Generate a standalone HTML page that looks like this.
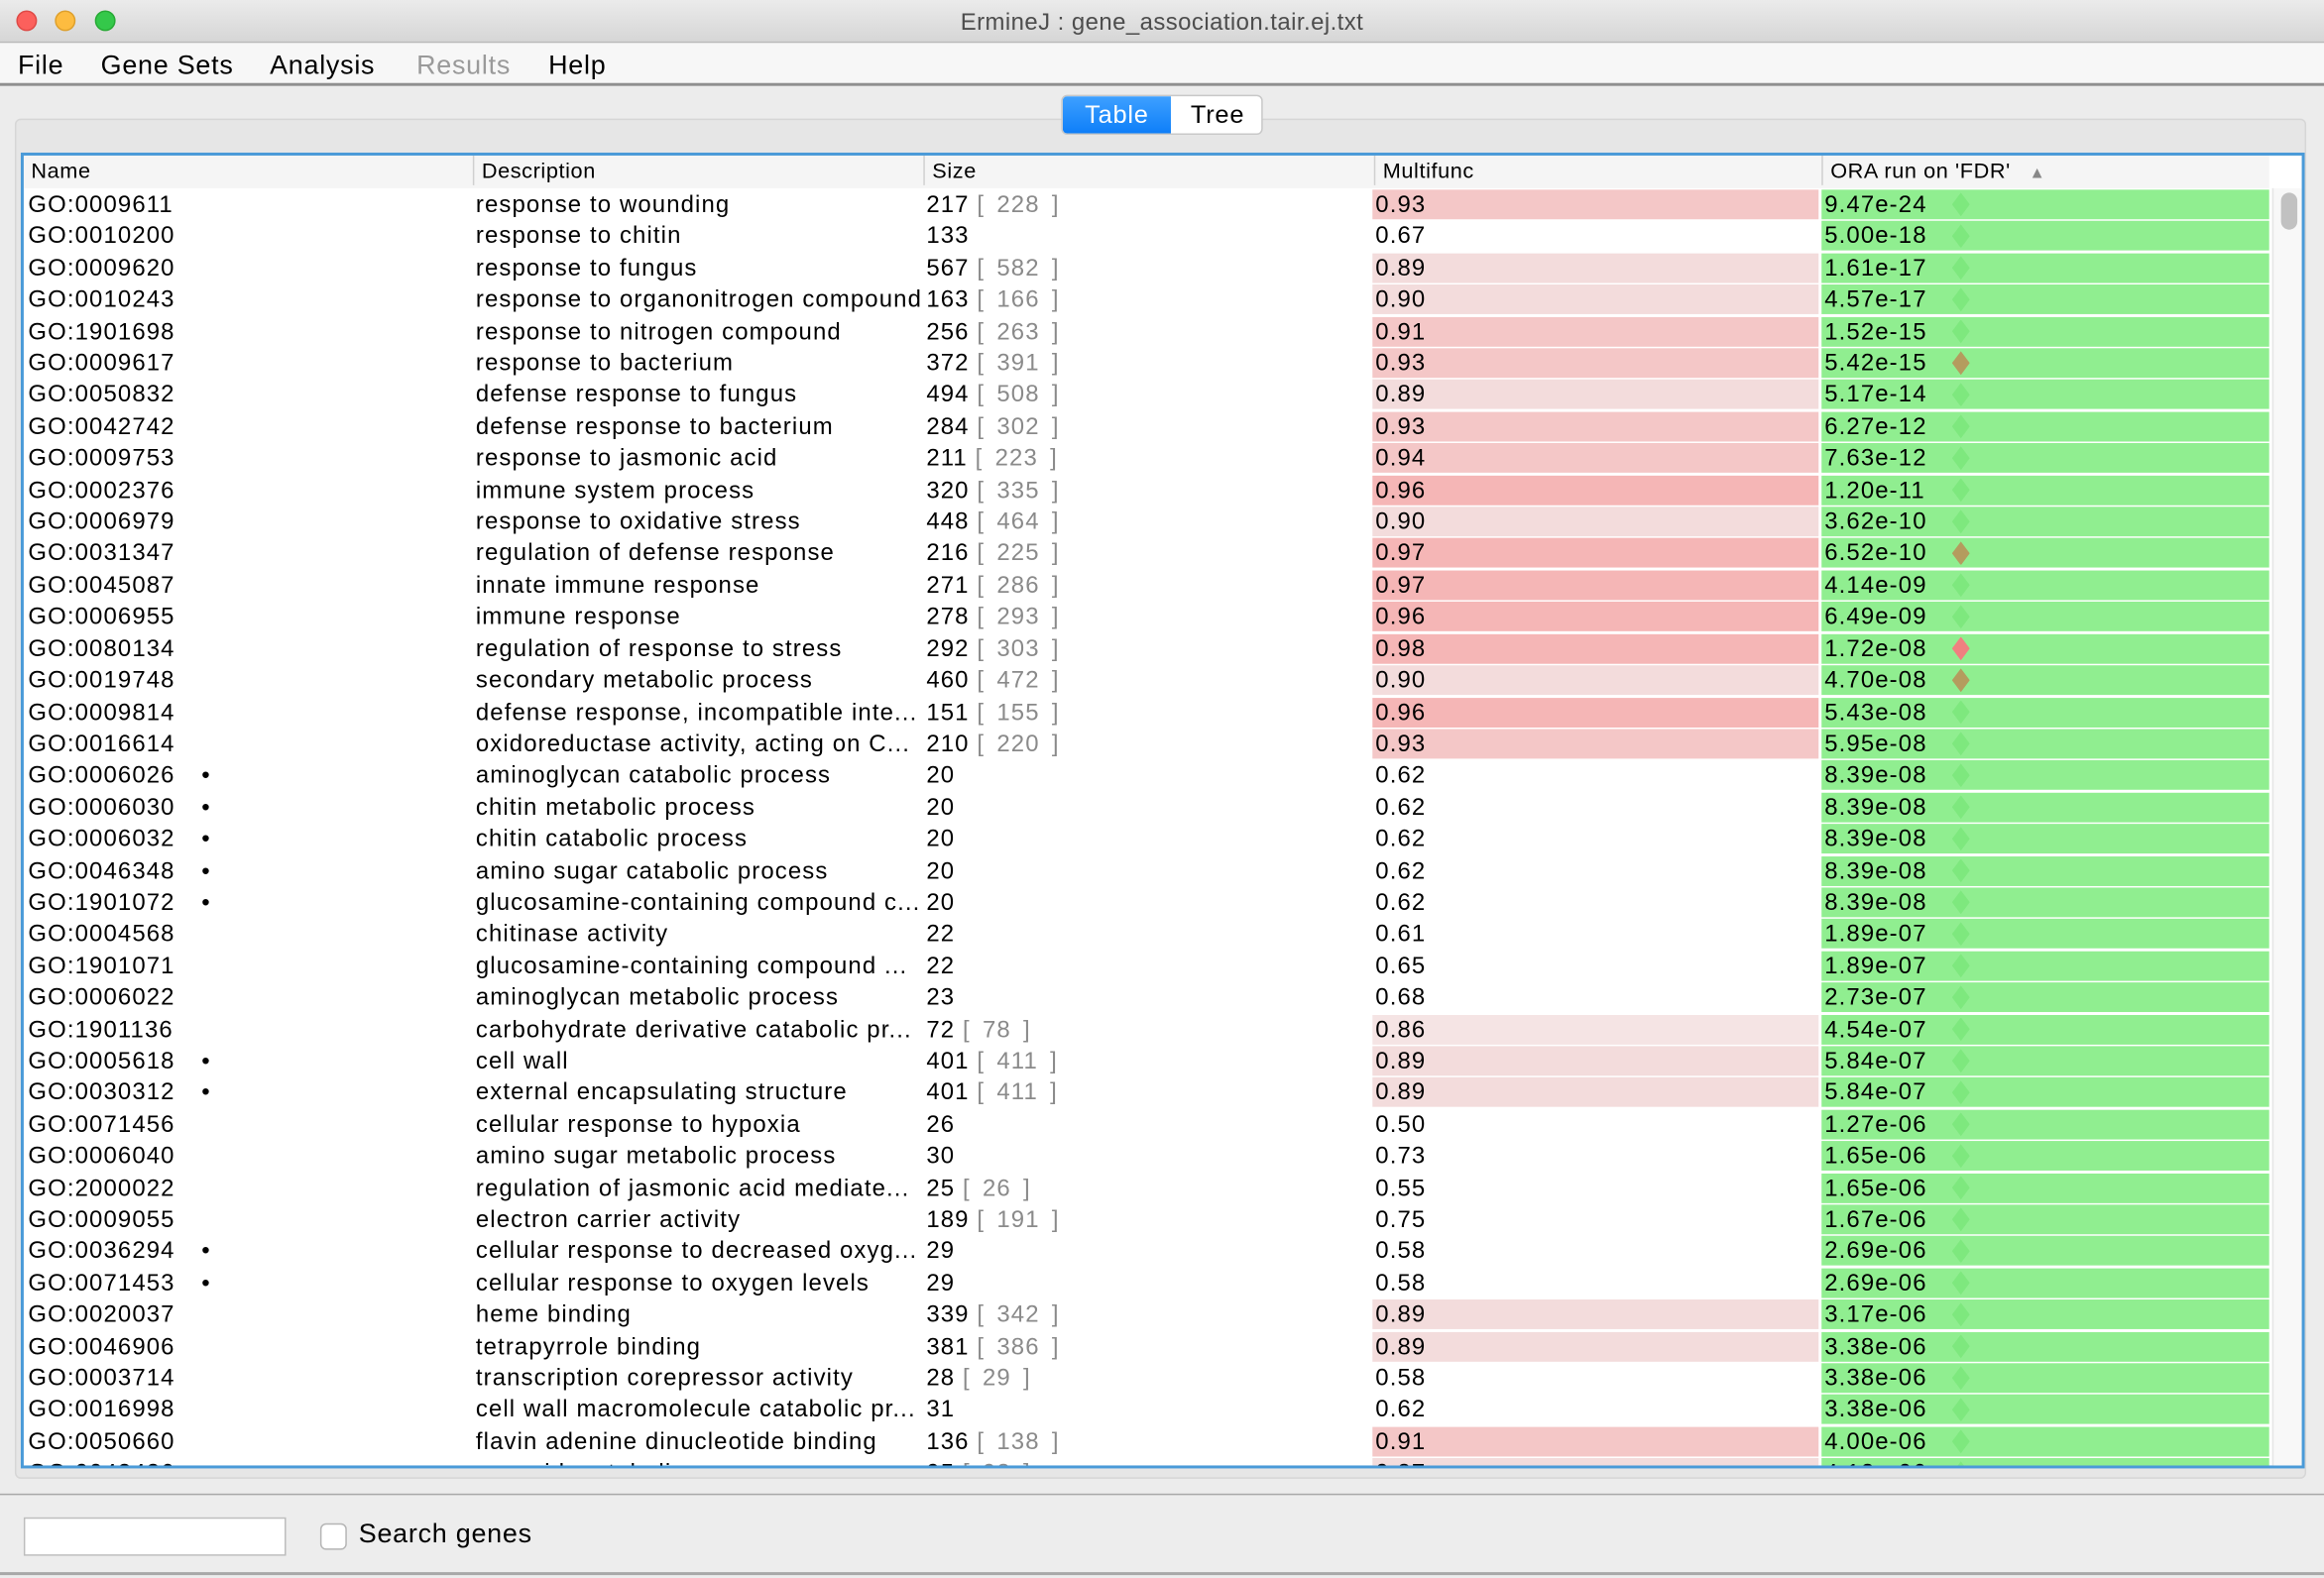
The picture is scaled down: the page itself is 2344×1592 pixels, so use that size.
<!DOCTYPE html>
<html><head><meta charset="utf-8"><style>
*{box-sizing:border-box;margin:0;padding:0}
html,body{width:2344px;height:1592px;overflow:hidden;background:#ececec}
#w{position:absolute;left:0;top:0;width:1568px;height:1065px;transform:scale(1.49490);transform-origin:0 0;font-family:"Liberation Sans","DejaVu Sans",sans-serif;background:#ececec;overflow:hidden}
.abs{position:absolute}
#title{left:0;top:0;width:1568px;height:29px;background:linear-gradient(#ebebeb,#d6d6d6);border-bottom:1px solid #b8b8b8;text-align:center;font-size:16px;line-height:31px;color:#4d4d4d;letter-spacing:.3px}
.tl{top:7px;width:14px;height:14px;border-radius:50%}
#menu{left:0;top:29px;width:1568px;height:29px;background:#f7f7f7;border-bottom:2px solid #8f8f8f;font-size:18px;line-height:30px;letter-spacing:.5px}
#menu span{position:absolute;top:0}
#tog{left:716px;top:64px;width:136px;height:27px;border-radius:4px;border:1px solid #c8c8c8;background:#fff;font-size:17px;line-height:26px;letter-spacing:.5px;overflow:hidden}
#tbl{left:14px;top:103px;width:1541px;height:888px;border:2px solid #4a9ad8;background:#fff;overflow:hidden}
#hdr{position:absolute;left:0;top:0;width:1515px;height:22px;background:#f5f5f5;font-size:14.5px;line-height:22px;letter-spacing:.4px}
#hdr span{position:absolute;top:0;border-left:1px solid #d0d0d0;padding-left:5px;height:20px}
#rows{position:absolute;left:0;top:22px;width:1515px}
.r{height:21.41px;position:relative;font-size:16px;letter-spacing:.75px;line-height:21px}
.r div{position:absolute;top:1px;height:20px;white-space:nowrap;overflow:hidden}
.n{left:3px;width:300px}
.n i{font-style:normal;position:absolute;left:117px;top:0}
.d{left:305px;width:304px}
.s{left:609px;width:302px}
.s em{font-style:normal;color:#8a8a8a;word-spacing:3px}
.m{left:910px;width:301px;padding-left:2px}
.o{left:1213px;width:302px;background:#90ee90;padding-left:2px}
.p1{background:#f5b6b6}.p2{background:#f4c7c7}.p3{background:#f3dcdc}.p4{background:#f5e4e4}
.o b{position:absolute;left:88px;top:2px;width:12px;height:16px;background:#7ee87e;clip-path:polygon(50% 0,100% 50%,50% 100%,0 50%)}
.o b.br{background:#b49c5e}.o b.rd{background:#f08080}
#sb{left:1517px;top:22px;width:20px;height:864px;background:#f8f8f8;border-left:1px solid #e6e6e6}
#thumb{left:5px;top:3px;width:11px;height:25px;border-radius:6px;background:#c1c1c1}
#bot{left:0;top:1008px;width:1568px;height:55px;background:#ededed;border-top:1px solid #a8a8a8;border-bottom:2px solid #a8a8a8}
</style></head><body><div id="w">
<div id="title" class="abs">ErmineJ : gene_association.tair.ej.txt
<div class="abs tl" style="left:11px;background:#fc605c;border:1px solid #de4a46"></div>
<div class="abs tl" style="left:37px;background:#fdbc40;border:1px solid #dea02c"></div>
<div class="abs tl" style="left:64px;background:#34c84a;border:1px solid #27aa35"></div>
</div>
<div id="menu" class="abs"><span style="left:12px">File</span><span style="left:68px">Gene Sets</span><span style="left:182px">Analysis</span><span style="left:281px;color:#9a9a9a">Results</span><span style="left:370px">Help</span></div>
<div class="abs" style="left:10px;top:80px;width:1546px;height:918px;border:1px solid #d6d6d6;border-radius:4px;background:#e6e6e6"></div>
<div id="tog" class="abs"><div class="abs" style="left:0;top:0;width:73px;height:27px;background:linear-gradient(#3ea0ff,#0a7cf8);color:#fff;text-align:center">Table</div><div class="abs" style="left:73px;top:0;width:63px;text-align:center">Tree</div></div>
<div id="tbl" class="abs">
<div id="hdr"><span style="left:0;border-left:none">Name</span><span style="left:303px">Description</span><span style="left:607px">Size</span><span style="left:911px">Multifunc</span><span style="left:1213px">ORA run on 'FDR' <small style="font-size:11px;color:#888;margin-left:8px">▲</small></span></div>
<div id="sb" class="abs"><div id="thumb" class="abs"></div></div>
<div id="rows">
<div class="r"><div class="n">GO:0009611</div><div class="d">response to wounding</div><div class="s">217 <em>[ 228 ]</em></div><div class="m p2">0.93</div><div class="o">9.47e-24<b></b></div></div>
<div class="r"><div class="n">GO:0010200</div><div class="d">response to chitin</div><div class="s">133</div><div class="m">0.67</div><div class="o">5.00e-18<b></b></div></div>
<div class="r"><div class="n">GO:0009620</div><div class="d">response to fungus</div><div class="s">567 <em>[ 582 ]</em></div><div class="m p3">0.89</div><div class="o">1.61e-17<b></b></div></div>
<div class="r"><div class="n">GO:0010243</div><div class="d">response to organonitrogen compound</div><div class="s">163 <em>[ 166 ]</em></div><div class="m p3">0.90</div><div class="o">4.57e-17<b></b></div></div>
<div class="r"><div class="n">GO:1901698</div><div class="d">response to nitrogen compound</div><div class="s">256 <em>[ 263 ]</em></div><div class="m p2">0.91</div><div class="o">1.52e-15<b></b></div></div>
<div class="r"><div class="n">GO:0009617</div><div class="d">response to bacterium</div><div class="s">372 <em>[ 391 ]</em></div><div class="m p2">0.93</div><div class="o">5.42e-15<b class="br"></b></div></div>
<div class="r"><div class="n">GO:0050832</div><div class="d">defense response to fungus</div><div class="s">494 <em>[ 508 ]</em></div><div class="m p3">0.89</div><div class="o">5.17e-14<b></b></div></div>
<div class="r"><div class="n">GO:0042742</div><div class="d">defense response to bacterium</div><div class="s">284 <em>[ 302 ]</em></div><div class="m p2">0.93</div><div class="o">6.27e-12<b></b></div></div>
<div class="r"><div class="n">GO:0009753</div><div class="d">response to jasmonic acid</div><div class="s">211 <em>[ 223 ]</em></div><div class="m p2">0.94</div><div class="o">7.63e-12<b></b></div></div>
<div class="r"><div class="n">GO:0002376</div><div class="d">immune system process</div><div class="s">320 <em>[ 335 ]</em></div><div class="m p1">0.96</div><div class="o">1.20e-11<b></b></div></div>
<div class="r"><div class="n">GO:0006979</div><div class="d">response to oxidative stress</div><div class="s">448 <em>[ 464 ]</em></div><div class="m p3">0.90</div><div class="o">3.62e-10<b></b></div></div>
<div class="r"><div class="n">GO:0031347</div><div class="d">regulation of defense response</div><div class="s">216 <em>[ 225 ]</em></div><div class="m p1">0.97</div><div class="o">6.52e-10<b class="br"></b></div></div>
<div class="r"><div class="n">GO:0045087</div><div class="d">innate immune response</div><div class="s">271 <em>[ 286 ]</em></div><div class="m p1">0.97</div><div class="o">4.14e-09<b></b></div></div>
<div class="r"><div class="n">GO:0006955</div><div class="d">immune response</div><div class="s">278 <em>[ 293 ]</em></div><div class="m p1">0.96</div><div class="o">6.49e-09<b></b></div></div>
<div class="r"><div class="n">GO:0080134</div><div class="d">regulation of response to stress</div><div class="s">292 <em>[ 303 ]</em></div><div class="m p1">0.98</div><div class="o">1.72e-08<b class="rd"></b></div></div>
<div class="r"><div class="n">GO:0019748</div><div class="d">secondary metabolic process</div><div class="s">460 <em>[ 472 ]</em></div><div class="m p3">0.90</div><div class="o">4.70e-08<b class="br"></b></div></div>
<div class="r"><div class="n">GO:0009814</div><div class="d">defense response, incompatible inte...</div><div class="s">151 <em>[ 155 ]</em></div><div class="m p1">0.96</div><div class="o">5.43e-08<b></b></div></div>
<div class="r"><div class="n">GO:0016614</div><div class="d">oxidoreductase activity, acting on C...</div><div class="s">210 <em>[ 220 ]</em></div><div class="m p2">0.93</div><div class="o">5.95e-08<b></b></div></div>
<div class="r"><div class="n">GO:0006026<i>•</i></div><div class="d">aminoglycan catabolic process</div><div class="s">20</div><div class="m">0.62</div><div class="o">8.39e-08<b></b></div></div>
<div class="r"><div class="n">GO:0006030<i>•</i></div><div class="d">chitin metabolic process</div><div class="s">20</div><div class="m">0.62</div><div class="o">8.39e-08<b></b></div></div>
<div class="r"><div class="n">GO:0006032<i>•</i></div><div class="d">chitin catabolic process</div><div class="s">20</div><div class="m">0.62</div><div class="o">8.39e-08<b></b></div></div>
<div class="r"><div class="n">GO:0046348<i>•</i></div><div class="d">amino sugar catabolic process</div><div class="s">20</div><div class="m">0.62</div><div class="o">8.39e-08<b></b></div></div>
<div class="r"><div class="n">GO:1901072<i>•</i></div><div class="d">glucosamine-containing compound c...</div><div class="s">20</div><div class="m">0.62</div><div class="o">8.39e-08<b></b></div></div>
<div class="r"><div class="n">GO:0004568</div><div class="d">chitinase activity</div><div class="s">22</div><div class="m">0.61</div><div class="o">1.89e-07<b></b></div></div>
<div class="r"><div class="n">GO:1901071</div><div class="d">glucosamine-containing compound ...</div><div class="s">22</div><div class="m">0.65</div><div class="o">1.89e-07<b></b></div></div>
<div class="r"><div class="n">GO:0006022</div><div class="d">aminoglycan metabolic process</div><div class="s">23</div><div class="m">0.68</div><div class="o">2.73e-07<b></b></div></div>
<div class="r"><div class="n">GO:1901136</div><div class="d">carbohydrate derivative catabolic pr...</div><div class="s">72 <em>[ 78 ]</em></div><div class="m p4">0.86</div><div class="o">4.54e-07<b></b></div></div>
<div class="r"><div class="n">GO:0005618<i>•</i></div><div class="d">cell wall</div><div class="s">401 <em>[ 411 ]</em></div><div class="m p3">0.89</div><div class="o">5.84e-07<b></b></div></div>
<div class="r"><div class="n">GO:0030312<i>•</i></div><div class="d">external encapsulating structure</div><div class="s">401 <em>[ 411 ]</em></div><div class="m p3">0.89</div><div class="o">5.84e-07<b></b></div></div>
<div class="r"><div class="n">GO:0071456</div><div class="d">cellular response to hypoxia</div><div class="s">26</div><div class="m">0.50</div><div class="o">1.27e-06<b></b></div></div>
<div class="r"><div class="n">GO:0006040</div><div class="d">amino sugar metabolic process</div><div class="s">30</div><div class="m">0.73</div><div class="o">1.65e-06<b></b></div></div>
<div class="r"><div class="n">GO:2000022</div><div class="d">regulation of jasmonic acid mediate...</div><div class="s">25 <em>[ 26 ]</em></div><div class="m">0.55</div><div class="o">1.65e-06<b></b></div></div>
<div class="r"><div class="n">GO:0009055</div><div class="d">electron carrier activity</div><div class="s">189 <em>[ 191 ]</em></div><div class="m">0.75</div><div class="o">1.67e-06<b></b></div></div>
<div class="r"><div class="n">GO:0036294<i>•</i></div><div class="d">cellular response to decreased oxyg...</div><div class="s">29</div><div class="m">0.58</div><div class="o">2.69e-06<b></b></div></div>
<div class="r"><div class="n">GO:0071453<i>•</i></div><div class="d">cellular response to oxygen levels</div><div class="s">29</div><div class="m">0.58</div><div class="o">2.69e-06<b></b></div></div>
<div class="r"><div class="n">GO:0020037</div><div class="d">heme binding</div><div class="s">339 <em>[ 342 ]</em></div><div class="m p3">0.89</div><div class="o">3.17e-06<b></b></div></div>
<div class="r"><div class="n">GO:0046906</div><div class="d">tetrapyrrole binding</div><div class="s">381 <em>[ 386 ]</em></div><div class="m p3">0.89</div><div class="o">3.38e-06<b></b></div></div>
<div class="r"><div class="n">GO:0003714</div><div class="d">transcription corepressor activity</div><div class="s">28 <em>[ 29 ]</em></div><div class="m">0.58</div><div class="o">3.38e-06<b></b></div></div>
<div class="r"><div class="n">GO:0016998</div><div class="d">cell wall macromolecule catabolic pr...</div><div class="s">31</div><div class="m">0.62</div><div class="o">3.38e-06<b></b></div></div>
<div class="r"><div class="n">GO:0050660</div><div class="d">flavin adenine dinucleotide binding</div><div class="s">136 <em>[ 138 ]</em></div><div class="m p2">0.91</div><div class="o">4.00e-06<b></b></div></div>
<div class="r"><div class="n">GO:0043436</div><div class="d">oxoacid metabolic process</div><div class="s">95 <em>[ 98 ]</em></div><div class="m p3">0.87</div><div class="o">4.12e-06<b></b></div></div>
</div>
</div>
<div id="bot" class="abs">
<div class="abs" style="left:16px;top:15px;width:177px;height:26px;background:#fff;border:1px solid #bdbdbd"></div>
<div class="abs" style="left:216px;top:19px;width:18px;height:18px;background:#fff;border:1px solid #b5b5b5;border-radius:4px"></div>
<div class="abs" style="left:242px;top:16px;font-size:18px;letter-spacing:.5px">Search genes</div>
</div>
</div></body></html>
